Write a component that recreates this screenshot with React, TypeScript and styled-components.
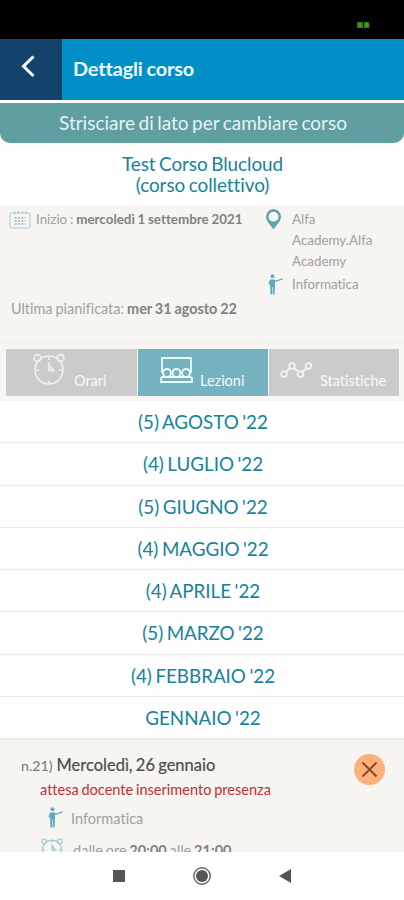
import React from "react";
import styled, { createGlobalStyle } from "styled-components";

const GlobalStyle = createGlobalStyle`
  * { box-sizing: border-box; }
  body {
    margin: 0;
    background: #fff;
    font-family: Lato, "Liberation Sans", sans-serif;
    font-variant-ligatures: none;
  }
`;

const Screen = styled.div`
  width: 404px;
  height: 900px;
  display: flex;
  flex-direction: column;
  overflow: hidden;
  background: #fefefe;
`;

const StatusBar = styled.div`
  height: 39px;
  flex: none;
  background: #000;
  display: flex;
  justify-content: flex-end;
  padding: 22px 34px 0 0;
`;

const Header = styled.header`
  height: 61px;
  flex: none;
  display: flex;
  align-items: stretch;
  background: #018fc8;
`;

const BackButton = styled.button`
  width: 62px;
  border: 0;
  padding: 16px 0 0 21px;
  display: flex;
  align-items: flex-start;
  background: #13426c;
`;

const Title = styled.h1`
  margin: 0;
  padding: 17px 0 0 11px;
  font-size: 19.8px;
  line-height: 24px;
  font-weight: 700;
  letter-spacing: -0.1px;
  word-spacing: -1px;
  color: #f0fafe;
`;

const SwipeHint = styled.div`
  margin-top: 3px;
  height: 40px;
  flex: none;
  border-radius: 0 0 10px 10px;
  background: #5f9fa0;
  color: #e6f2f4;
  text-align: center;
  padding-left: 2px;
  font-size: 19px;
  word-spacing: -1.4px;
  line-height: 39px;
`;

const CourseName = styled.h2`
  margin: 0;
  height: 62px;
  flex: none;
  padding: 10px 0 0 1px;
  text-align: center;
  font-weight: 400;
  font-size: 18.9px;
  letter-spacing: -0.06px;
  word-spacing: -1.2px;
  line-height: 21px;
  color: #168399;
`;

const CourseInfo = styled.section`
  height: 138px;
  flex: none;
  background: #f6f5f1;
  border-bottom: 1px solid #eeede8;
  color: #a0a09d;
  font-size: 13.4px;
  display: grid;
  grid-template-columns: 265px 1fr;
`;

const InfoColumn = styled.div`
  display: flex;
  flex-direction: column;
`;

const StartLine = styled.div`
  display: flex;
  gap: 5px;
  padding: 4px 0 0 9px;
  height: 94px;
  line-height: 21px;
  word-spacing: -0.6px;
  white-space: nowrap;
`;

const PlannedLine = styled.div`
  padding-left: 11px;
  font-size: 14.4px;
  line-height: 20px;
  word-spacing: -0.6px;
  white-space: nowrap;
`;

const Strong = styled.b`
  color: #82827f;
  font-weight: 700;
`;

const Detail = styled.div<{ $top: number }>`
  display: grid;
  grid-template-columns: 27px 90px;
  padding-top: ${(p) => p.$top}px;
  line-height: 21px;
  align-items: start;
`;

const Tabs = styled.nav`
  height: 58px;
  flex: none;
  display: grid;
  grid-template-columns: 131px 130px 130px;
  gap: 1px;
  padding: 6px 5px 5px 6px;
  background: #f7f6f3;
  border-bottom: 1px solid #f3f2ef;
`;

const Tab = styled.button<{ $active?: boolean; $pad: number; $gap: number }>`
  border: 0;
  height: 47px;
  display: flex;
  align-items: flex-start;
  gap: ${(p) => p.$gap}px;
  padding: 0 0 0 ${(p) => p.$pad}px;
  background: ${(p) => (p.$active ? "#75b3c1" : "#cbcbcb")};
  color: #f7fafa;
  font: 400 14.5px/20px Lato, sans-serif;
  font-variant-ligatures: none;
`;

const TabLabel = styled.span`
  padding-top: 22px;
`;

const Month = styled.div`
  height: 42.25px;
  flex: none;
  border-bottom: 1px solid #e9eaea;
  text-align: center;
  padding-left: 2px;
  font-size: 18.8px;
  word-spacing: -1.3px;
  line-height: 42px;
  color: #168399;
`;

const Lesson = styled.section`
  flex: none;
  height: 113px;
  overflow: hidden;
  display: flex;
  justify-content: space-between;
  padding: 14px 19px 0 21px;
  background: #f6f5f1;
  border-top: 1px solid #e9e8e5;
`;

const LessonBody = styled.div`
  white-space: nowrap;
  word-spacing: -1px;
`;

const LessonTitle = styled.div`
  display: flex;
  align-items: baseline;
  gap: 4px;
  height: 22px;
  font-size: 16.5px;
  line-height: 22px;
  color: #4c4c4c;
  -webkit-text-stroke: 0.2px #4c4c4c;
`;

const LessonNumber = styled.span`
  font-size: 14.2px;
  color: #777;
  -webkit-text-stroke: 0;
`;

const Warning = styled.div`
  padding: 4px 0 0 19px;
  font-size: 14.55px;
  line-height: 20px;
  color: #bd303a;
`;

const LessonLine = styled.div<{ $gap: number; $left: number; $top: number }>`
  display: flex;
  align-items: flex-start;
  gap: ${(p) => p.$gap}px;
  padding: ${(p) => p.$top}px 0 0 ${(p) => p.$left}px;
  font-size: 14.55px;
  line-height: 21px;
  color: #a0a09d;
`;

const LessonText = styled.span<{ $drop?: number }>`
  padding-top: ${(p) => p.$drop ?? 0}px;
`;

const CancelButton = styled.button`
  width: 31px;
  height: 31px;
  border: 0;
  border-radius: 50%;
  background: #fdb07a;
  display: grid;
  place-items: center;
  padding: 0;
`;

const NavBar = styled.footer`
  height: 48px;
  flex: none;
  display: flex;
  align-items: center;
  padding-left: 113px;
  background: #fefefe;
`;

const NavIcon = styled.svg<{ $gap?: number }>`
  margin-right: ${(p) => p.$gap ?? 0}px;
  flex: none;
`;

const Teacher = () => (
  <svg width="18" height="21" viewBox="0 0 18 21">
    <circle cx="7.5" cy="2.2" r="2" fill="#63a9c0" />
    <path d="M5 5.5h5v5l-.4 10H7.9V13h-.6v7.5H5.4z" fill="#63a9c0" />
    <path d="M5.5 6 4.2 9.5 7 11.5M9 7.5l3.6-.8L17.5 4.8" fill="none" stroke="#63a9c0" strokeWidth="1.3" />
  </svg>
);

const ClockIcon = styled.svg<{ $drop?: number }>`
  flex: none;
  margin-top: ${(p) => p.$drop ?? 0}px;
`;

const Clock = ({ size, color, width, drop }: { size: number; color: string; width: number; drop?: number }) => (
  <ClockIcon $drop={drop} width={size} height={size} viewBox="0 0 32 32" fill="none" stroke={color} strokeWidth={width}>
    <circle cx="16" cy="17" r="14" />
    <circle cx="4.5" cy="5" r="3.4" />
    <circle cx="27.5" cy="5" r="3.4" />
    <path d="M16 9.5v8h6M16 4v3M16 27.5v3M3 17h3M26 17h3M17 13l3.5 4" />
  </ClockIcon>
);

const months = [
  "(5) AGOSTO '22",
  "(4) LUGLIO '22",
  "(5) GIUGNO '22",
  "(4) MAGGIO '22",
  "(4) APRILE '22",
  "(5) MARZO '22",
  "(4) FEBBRAIO '22",
  "GENNAIO '22",
];

export default function App() {
  return (
    <>
      <GlobalStyle />
      <Screen>
        <StatusBar>
          <svg width="13" height="6" viewBox="0 0 13 6">
            <path d="M0 0h6v6H0zM7 0h5v2l1 1-1 3H7z" fill="#2f7d12" />
            <path d="M2 2h2M2 4h2M8 2h3M8 4h3" stroke="#5fb63a" />
          </svg>
        </StatusBar>
        <Header>
          <BackButton aria-label="Indietro">
            <svg width="14" height="23" viewBox="0 0 14 23">
              <path d="M12.5 1.5 2.5 11.2 12.5 21" fill="none" stroke="#fff" strokeWidth="3" />
            </svg>
          </BackButton>
          <Title>Dettagli corso</Title>
        </Header>
        <SwipeHint>Strisciare di lato per cambiare corso</SwipeHint>
        <CourseName>
          Test Corso Blucloud
          <br />
          (corso collettivo)
        </CourseName>
        <CourseInfo>
          <InfoColumn>
            <StartLine>
              <svg width="22" height="21" viewBox="0 0 22 21" fill="none" stroke="#a5c8ce">
                <rect x="1" y="4" width="20" height="15" rx="1.5" />
                <path d="M5.5 2v3M9.5 2v3M13.5 2v3M17 2v3" />
                <path d="M5.5 9h11M5.5 12h11M5.5 15h11" strokeWidth="2" strokeDasharray="2 1.4" />
              </svg>
              <span>
                Inizio : <Strong>mercoledì 1 settembre 2021</Strong>
              </span>
            </StartLine>
            <PlannedLine>
              Ultima pianificata: <Strong>mer 31 agosto 22</Strong>
            </PlannedLine>
          </InfoColumn>
          <InfoColumn>
            <Detail $top={4}>
              <svg width="17" height="21" viewBox="0 0 17 21">
                <path
                  fillRule="evenodd"
                  d="M8.5 0A7.7 7.7 0 0 0 1 8c0 4 4.4 8 7.5 12.5C11.6 16 16 12 16 8A7.7 7.7 0 0 0 8.5 0Zm0 2.7a5 5 0 1 1 0 10 5 5 0 0 1 0-10Z"
                  fill="#5fa5ae"
                />
              </svg>
              <span>Alfa Academy.Alfa Academy</span>
            </Detail>
            <Detail $top={2}>
              <Teacher />
              <span>Informatica</span>
            </Detail>
          </InfoColumn>
        </CourseInfo>
        <Tabs>
          <Tab $pad={27} $gap={9}>
            <Clock size={32} color="#f1f1f1" width={1.6} drop={4} />
            <TabLabel>Orari</TabLabel>
          </Tab>
          <Tab $active $pad={22} $gap={7}>
            <svg width="33" height="36" viewBox="0 0 33 36" fill="none" stroke="#eff9fb" strokeWidth="1.8">
              <path d="M2 24V9h29v15M1 33v-3q0-2 2-2h27q2 0 2 2v3z" />
              <circle cx="7" cy="24" r="4" />
              <circle cx="16.5" cy="24" r="4" />
              <circle cx="26" cy="24" r="4" />
            </svg>
            <TabLabel>Lezioni</TabLabel>
          </Tab>
          <Tab $pad={11} $gap={7}>
            <svg width="33" height="30" viewBox="0 0 33 30" fill="none" stroke="#f4f4f4" strokeWidth="1.8">
              <circle cx="4" cy="25" r="2.8" />
              <circle cx="12" cy="17" r="2.8" />
              <circle cx="20.5" cy="25" r="2.8" />
              <circle cx="28.5" cy="17" r="2.8" />
              <path d="m6 23 4-4M14 19l5 4M22 23l5-4" />
            </svg>
            <TabLabel>Statistiche</TabLabel>
          </Tab>
        </Tabs>
        {months.map((m) => (
          <Month key={m}>{m}</Month>
        ))}
        <Lesson>
          <LessonBody>
            <LessonTitle>
              <LessonNumber>n.21)</LessonNumber>
              <span>Mercoledì, 26 gennaio</span>
            </LessonTitle>
            <Warning>attesa docente inserimento presenza</Warning>
            <LessonLine $left={24} $gap={8} $top={7}>
              <Teacher />
              <LessonText $drop={1}>Informatica</LessonText>
            </LessonLine>
            <LessonLine $left={20} $gap={10} $top={9}>
              <Clock size={22} color="#a2cbd2" width={1.8} />
              <LessonText $drop={2}>
                dalle ore <Strong>20:00</Strong> alle <Strong>21:00</Strong>
              </LessonText>
            </LessonLine>
          </LessonBody>
          <CancelButton aria-label="Annulla">
            <svg width="17" height="17" viewBox="0 0 17 17">
              <path d="m1.5 1.5 14 14m0-14-14 14" stroke="#8a4a1c" strokeWidth="2" />
            </svg>
          </CancelButton>
        </Lesson>
        <NavBar>
          <NavIcon $gap={68} width="12" height="12" viewBox="0 0 12 12">
            <path d="M0 0h12v12H0z" fill="#555" />
          </NavIcon>
          <NavIcon $gap={68} width="18" height="18" viewBox="0 0 18 18">
            <circle cx="9" cy="9" r="8.2" fill="none" stroke="#666" strokeWidth="1.4" />
            <circle cx="9" cy="9" r="6" fill="#555" />
          </NavIcon>
          <NavIcon width="12" height="14" viewBox="0 0 12 14">
            <path d="M0 7 12 0v14z" fill="#555" />
          </NavIcon>
        </NavBar>
      </Screen>
    </>
  );
}
